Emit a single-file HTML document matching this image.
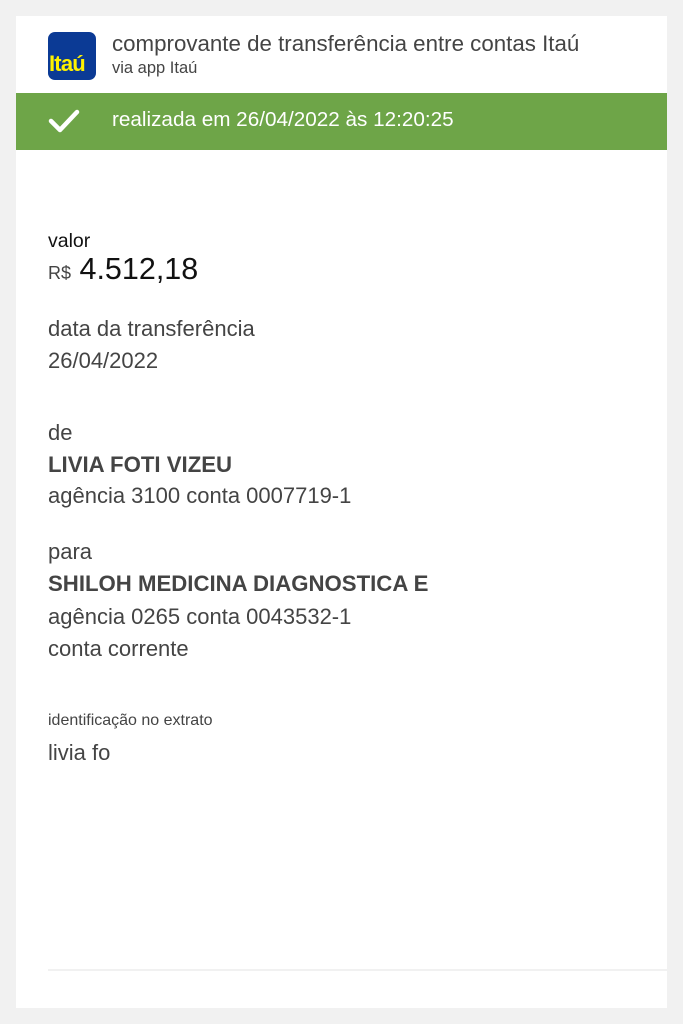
<!DOCTYPE html>
<html><head><meta charset="utf-8"><style>
body{margin:0;width:683px;height:1024px;background:#f1f1f1;font-family:"Liberation Sans",sans-serif;position:relative;overflow:hidden}
.card{position:absolute;left:16px;top:16px;width:651px;height:992px;background:#fff}
.t{position:absolute;left:48px;white-space:nowrap;color:#444;font-size:22px;line-height:24px}
.logo{position:absolute;left:48px;top:32px;width:48px;height:48px;background:#0b3a95;border-radius:7px;overflow:hidden}
.logo span{position:absolute;left:1px;top:20px;color:#fff200;font-weight:bold;font-size:22px;line-height:24px;letter-spacing:-0.8px}
.bar{position:absolute;left:16px;top:93px;width:651px;height:57px;background:#6ea548}
.line{position:absolute;left:48px;top:969px;width:619px;height:2px;background:#f1f1f1}
</style></head><body>
<div class="card"></div>
<div class="logo"><span>Itaú</span></div>
<div class="t" style="left:112px;top:32px;font-size:22.3px">comprovante de transferência entre contas Itaú</div>
<div class="t" style="left:112px;top:59px;font-size:16.5px;line-height:18px">via app Itaú</div>
<div class="bar"></div>
<svg style="position:absolute;left:48px;top:108px" width="32" height="26" viewBox="0 0 32 26"><path d="M3 13 L12 22 L29 4" fill="none" stroke="#fff" stroke-width="4.5" stroke-linecap="round" stroke-linejoin="round"/></svg>
<div class="t" style="left:112px;top:108px;color:#fff;font-size:20.7px">realizada em 26/04/2022 às 12:20:25</div>
<div class="t" style="top:229px;color:#111;font-size:19.5px">valor</div>
<div class="t" style="top:252px;color:#111;font-size:30.5px;line-height:34px"><span style="font-size:18px;color:#444">R$</span> 4.512,18</div>
<div class="t" style="top:317px">data da transferência</div>
<div class="t" style="top:349px">26/04/2022</div>
<div class="t" style="top:421px">de</div>
<div class="t" style="top:453px;font-weight:bold;font-size:22.2px">LIVIA FOTI VIZEU</div>
<div class="t" style="top:484px">agência 3100 conta 0007719-1</div>
<div class="t" style="top:540px">para</div>
<div class="t" style="top:572px;font-weight:bold;font-size:22.2px">SHILOH MEDICINA DIAGNOSTICA E</div>
<div class="t" style="top:605px">agência 0265 conta 0043532-1</div>
<div class="t" style="top:637px">conta corrente</div>
<div class="t" style="top:712px;font-size:16px;line-height:18px">identificação no extrato</div>
<div class="t" style="top:741px">livia fo</div>
<div class="line"></div>
</body></html>
